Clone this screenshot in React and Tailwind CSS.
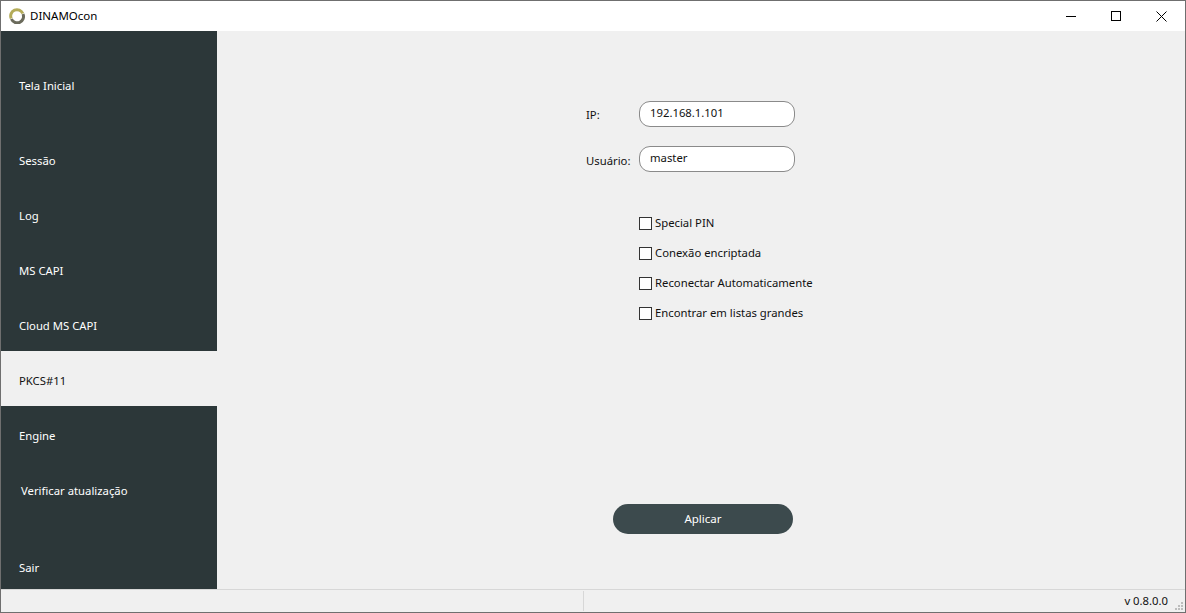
export default function App() {
  const menu = [
    { label: 'Tela Inicial', cls: 'mt-[24px] pl-[18px] pt-[7px]' },
    { label: 'Sessão', cls: 'mt-[21px] pl-[18px] pt-[5px]' },
    { label: 'Log', cls: 'pl-[18px] pt-[5px]' },
    { label: 'MS CAPI', cls: 'pl-[18px] pt-[5px]' },
    { label: 'Cloud MS CAPI', cls: 'pl-[18px] pt-[5px]' },
    { label: 'PKCS#11', cls: 'pl-[18px] pt-[5px] bg-[#f0f0f0] text-[#111111]', active: true },
    { label: 'Engine', cls: 'pl-[18px] pt-[5px]' },
    { label: 'Verificar atualização', cls: 'pl-[20px] pt-[5px]' },
    { label: 'Sair', cls: 'mt-[21px] pl-[18px] pt-[7px]' },
  ];
  const options = ['Special PIN', 'Conexão encriptada', 'Reconectar Automaticamente', 'Encontrar em listas grandes'];

  return (
    <div className="w-[1186px] h-[613px] flex flex-col overflow-hidden border border-[#6f6f6f] bg-[#f0f0f0] text-[11.3px] text-[#111111] font-['Noto_Sans',sans-serif]">
      {/* Title bar */}
      <div className="h-[30px] shrink-0 bg-white flex items-center">
        <svg className="ml-[8px] w-[16px] h-[16px]" viewBox="0 0 16 16" fill="none" strokeWidth="3">
          <path d="M2.2 10.5A6.3 6.3 0 0 1 13.8 5.5" stroke="#b3ab58" />
          <path d="M14 6A6.3 6.3 0 0 1 2.4 11" stroke="#6b6b5c" />
        </svg>
        <span className="ml-[5px] text-black text-[11.5px]">DINAMOcon</span>
        <div className="ml-auto flex h-full text-black">
          <div className="w-[46px] flex items-center justify-center">
            <svg width="10" height="10" viewBox="0 0 10 10"><path d="M0 5.5H10" stroke="#000" /></svg>
          </div>
          <div className="w-[44px] flex items-center justify-center">
            <svg width="10" height="10" viewBox="0 0 10 10" fill="none"><rect x="0.5" y="0.5" width="9" height="9" stroke="#000" /></svg>
          </div>
          <div className="w-[47px] flex items-center justify-center">
            <svg width="11" height="11" viewBox="0 0 11 11" fill="none"><path d="M0.5 0.5L10.5 10.5M10.5 0.5L0.5 10.5" stroke="#000" /></svg>
          </div>
        </div>
      </div>

      <div className="flex-1 flex min-h-0">
        {/* Sidebar */}
        <div className="w-[216px] shrink-0 bg-[#2c3739] flex flex-col overflow-hidden">
          {menu.map((item) => (
            <div
              key={item.label}
              className={`h-[55px] shrink-0 flex items-center ${item.cls} ${item.active ? '' : 'text-white'}`}
            >
              {item.label}
            </div>
          ))}
        </div>

        {/* Main */}
        <div className="flex-1 bg-[#f0f0f0] pl-[369px] pt-[70px] flex flex-col items-start">
          <div className="flex items-center h-[26px]">
            <span className="w-[53px] pt-[2px]">IP:</span>
            <div className="w-[156px] h-[26px] rounded-[11px] border border-[#8a8a8a] bg-white pl-[10px] flex items-center pb-[2px]">192.168.1.101</div>
          </div>
          <div className="flex items-center h-[26px] mt-[19px]">
            <span className="w-[53px] pt-[5px]">Usuário:</span>
            <div className="w-[156px] h-[26px] rounded-[11px] border border-[#8a8a8a] bg-white pl-[10px] flex items-center pb-[2px]">master</div>
          </div>
          <div className="ml-[53px] mt-[45px] flex flex-col gap-[17px]">
            {options.map((o) => (
              <div key={o} className="flex items-center h-[13px] gap-[3px] whitespace-nowrap">
                <span className="w-[13px] h-[13px] border border-[#333] bg-white shrink-0" />
                <span>{o}</span>
              </div>
            ))}
          </div>
          <button className="ml-[27px] mt-[184px] w-[180px] h-[30px] rounded-[15px] bg-[#3c4a4d] text-white text-[11.5px]">Aplicar</button>
        </div>
      </div>

      {/* Status bar */}
      <div className="h-[23px] shrink-0 border-t border-[#d7d7d7] flex items-center bg-[#f0f0f0] relative">
        <div className="w-[583px] h-[20px] border-r border-[#d7d7d7]" />
        <span className="ml-auto mr-[17px]">v 0.8.0.0</span>
        <svg className="absolute right-[1px] bottom-[1px]" width="10" height="10" viewBox="0 0 10 10" fill="#bdbdbd">
          <rect x="7" y="1" width="2" height="2" />
          <rect x="4" y="4" width="2" height="2" />
          <rect x="7" y="4" width="2" height="2" />
          <rect x="1" y="7" width="2" height="2" />
          <rect x="4" y="7" width="2" height="2" />
          <rect x="7" y="7" width="2" height="2" />
        </svg>
      </div>
    </div>
  );
}
